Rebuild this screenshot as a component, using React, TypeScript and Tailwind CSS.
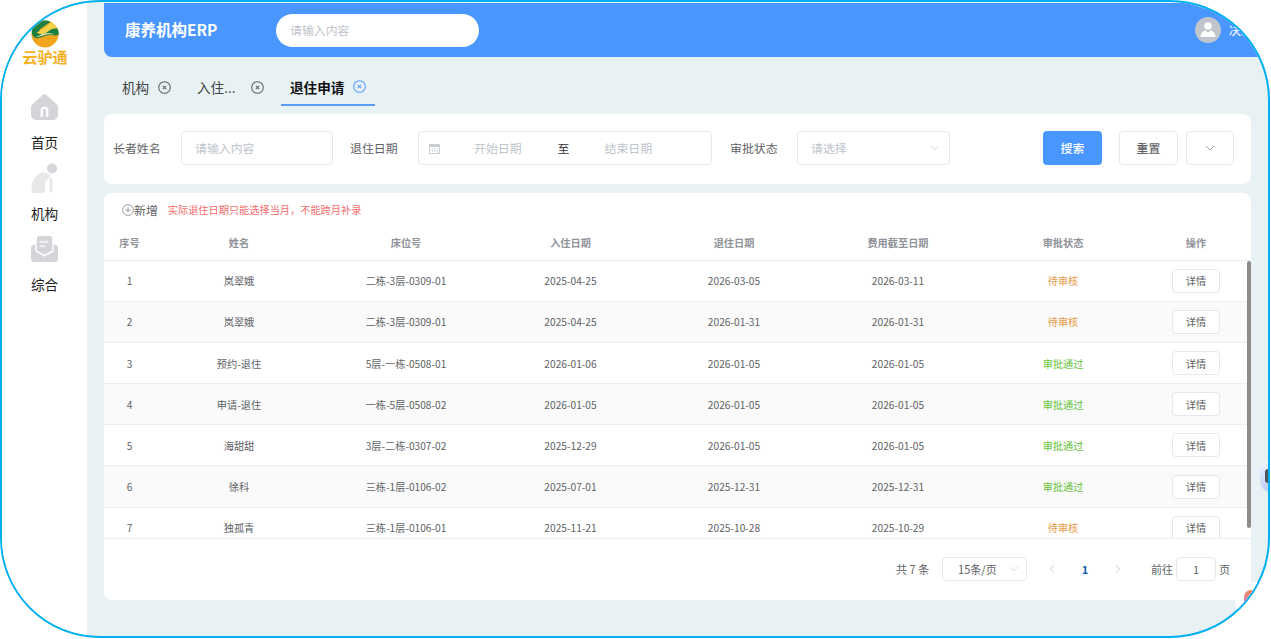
import { ChevronDown, ChevronLeft, ChevronRight } from "lucide-react";

const rows = [
  { id: 1, name: "岚翠娥", bed: "二栋-3层-0309-01", inDate: "2025-04-25", outDate: "2026-03-05", feeDate: "2026-03-11", status: "待审核" },
  { id: 2, name: "岚翠娥", bed: "二栋-3层-0309-01", inDate: "2025-04-25", outDate: "2026-01-31", feeDate: "2026-01-31", status: "待审核" },
  { id: 3, name: "预约-退住", bed: "5层-一栋-0508-01", inDate: "2026-01-06", outDate: "2026-01-05", feeDate: "2026-01-05", status: "审批通过" },
  { id: 4, name: "申请-退住", bed: "一栋-5层-0508-02", inDate: "2026-01-05", outDate: "2026-01-05", feeDate: "2026-01-05", status: "审批通过" },
  { id: 5, name: "海甜甜", bed: "3层-二栋-0307-02", inDate: "2025-12-29", outDate: "2026-01-05", feeDate: "2026-01-05", status: "审批通过" },
  { id: 6, name: "徐科", bed: "三栋-1层-0106-02", inDate: "2025-07-01", outDate: "2025-12-31", feeDate: "2025-12-31", status: "审批通过" },
  { id: 7, name: "独孤青", bed: "三栋-1层-0106-01", inDate: "2025-11-21", outDate: "2025-10-28", feeDate: "2025-10-29", status: "待审核" },
];

const columns = ["序号", "姓名", "床位号", "入住日期", "退住日期", "费用截至日期", "审批状态", "操作"];
const gridCols = "grid grid-cols-[51px_168px_166px_163px_164px_164px_166px_100px]";

function TabClose({ active, className }: { active?: boolean; className: string }) {
  const color = active ? "#5a9cff" : "#606266";
  return (
    <svg width="13" height="13" viewBox="0 0 13 13" fill="none" stroke={color} className={className}>
      <circle cx="6.500" cy="6.500" r="5.800" strokeWidth="1.100" />
      <path d="M4.800 4.800l3.400 3.400M8.200 4.800l-3.400 3.400" strokeWidth="1.100" />
    </svg>
  );
}

function Logo() {
  return (
    <svg width="28" height="28" viewBox="0 0 28 28">
      <circle cx="14" cy="14" r="13.500" fill="#f0a51c" />
      <path d="M1 10C3 4 8 .5 14 .5c2 0 4 .5 5.500 1.500C16 4 12 7 8 10c2 2 6 1 9-1 3-2 6-3 9-1.500 1.500 2.500 2 5 1.500 7.500-3 1-6 0-9 0-5 0-9 4-14 3C1 16 .5 13 1 10z" fill="#1e8040" />
      <path d="M6 13c4 2 8 1 11-1.500 3-2.500 6-3.500 9.500-2.500-1-2.500-3-5-6-6.500C17 4 13 8 9 10.500 7.500 11.500 6.500 12 6 13z" fill="#f6d24c" />
      <path d="M4 17c3 0 6-3 10-3.500 3-.5 7 .5 9 .5-3 1-5-.500-8 .5-4 1-7 3-11 2.500z" fill="#fdf3c4" />
    </svg>
  );
}

function HomeIcon() {
  return (
    <svg width="27" height="27" viewBox="0 0 28 28">
      <path d="M11.500 1.500a3.600 3.600 0 0 1 5 0L26.500 10.500a4 4 0 0 1 1.500 3.200V22a5 5 0 0 1-5 5H5a5 5 0 0 1-5-5V13.700a4 4 0 0 1 1.500-3.200z" fill="#d4d5d9" />
      <path d="M10 23.500V17a4 4 0 0 1 8 0v6.500h-2.300V17a1.700 1.700 0 0 0-3.400 0v6.500z" fill="#fff" />
    </svg>
  );
}

function ElderIcon() {
  return (
    <svg width="27" height="30" viewBox="0 0 27 30">
      <circle cx="21" cy="5.500" r="5" fill="#d6d7db" />
      <path d="M.5 27.500C-.5 19 5 9.500 13 9.500c3 0 5.500 1.500 7 3.500l-3.500 3c-1.500 1-2.500 3-2.500 5.500v6.500a2 2 0 0 1-2 2H3a2.500 2.500 0 0 1-2.500-2.500z" fill="#e8e8eb" />
      <path d="M18.500 15h3v13a1.500 1.500 0 0 1-3 0z" fill="#e8e8eb" />
    </svg>
  );
}

function MailIcon() {
  return (
    <svg width="27" height="26" viewBox="0 0 28 27">
      <path d="M6 2.500A2.500 2.500 0 0 1 8.500 0h11A2.500 2.500 0 0 1 22 2.500V15l-8 4.500L6 15z" fill="#d4d5d9" />
      <path d="M9 5h9v2H9zM9 9.500h5.500v2H9z" fill="#f3f3f5" />
      <path d="M0 11l4.500-3v8L14 21.500 23.500 16V8L28 11v13a3 3 0 0 1-3 3H3a3 3 0 0 1-3-3z" fill="#d4d5d9" />
    </svg>
  );
}

function NavItem({ icon, label }: { icon: React.ReactNode; label: string }) {
  return (
    <div className="flex h-[71px] flex-col items-center">
      <div className="flex h-[30px] items-center justify-center">{icon}</div>
      <div className="mt-[10px] text-[13.600px] leading-[20px] text-[#222]">{label}</div>
    </div>
  );
}

function Select({ className, placeholder }: { className: string; placeholder: string }) {
  return (
    <div className={`flex items-center justify-between rounded border border-[#e4e7ed] bg-white ${className}`}>
      <span className="text-[#c0c4cc]">{placeholder}</span>
      <ChevronDown size={14} strokeWidth={1} className="text-[#b4b8c0]" />
    </div>
  );
}

export default function App() {
  return (
    <div className="h-[639px] w-[1271px] overflow-hidden bg-white font-['Noto_Sans_CJK_SC','Noto_Sans',sans-serif]">
      <div className="relative flex h-[638px] w-[1270px] overflow-hidden rounded-[100px] border-2 border-[#00b0f0] bg-[#e8f1f4]">
        <aside className="w-[85px] shrink-0 bg-white">
          <div className="mt-[18px] flex flex-col items-center">
            <Logo />
            <div className="-mt-[1px] pl-[1px] text-[15px] leading-[20px] font-bold text-[#f5b01e]">云驴通</div>
          </div>
          <div className="mt-[25px]">
            <NavItem icon={<HomeIcon />} label="首页" />
            <NavItem icon={<ElderIcon />} label="机构" />
            <NavItem icon={<MailIcon />} label="综合" />
          </div>
        </aside>

        <main className="min-w-0 flex-1 pl-[17px]">
          <header className="mt-[1px] -mr-[4px] flex h-[54px] items-center rounded-bl-lg bg-[#4a96ff] pl-[21px]">
            <div className="w-[151px] text-[15.500px] font-bold text-white">康养机构ERP</div>
            <div className="flex h-[33px] w-[203px] items-center rounded-full bg-white pl-[14px] text-[11.900px] text-[#c0c4cc]">请输入内容</div>
            <div className="mr-[19px] ml-auto flex items-center">
              <svg width="26" height="26" viewBox="0 0 26 26">
                <circle cx="13" cy="13" r="13" fill="#c0c4cc" />
                <circle cx="13" cy="9" r="3.800" fill="#fff" />
                <path d="M5.500 20c0-4 3-6.500 4.500-6.500l3 2 3-2c1.500 0 4.500 2.500 4.500 6.500z" fill="#fff" />
              </svg>
              <span className="ml-[8px] w-[24px] text-[11.900px] whitespace-nowrap text-white">决策</span>
            </div>
          </header>

          <nav className="mt-[18px] flex h-[31px] items-start pl-[18px] text-[13.600px] leading-[24px] text-[#444]">
            <div className="flex w-[75px] items-center">机构<TabClose className="ml-[9px]" /></div>
            <div className="flex w-[84px] items-center">入住...<TabClose className="ml-[15px]" /></div>
            <div className="flex h-[31px] w-[94px] items-start border-b-2 border-[#5a9cff] pl-[9px] font-bold text-[#111]">
              <span>退住申请</span>
              <TabClose active className="mt-[5px] ml-[9px]" />
            </div>
          </nav>

          <section className="mt-[8px] flex h-[70px] w-[1147px] items-center rounded-lg bg-white pb-[2px] text-[11.900px] text-[#606266]">
            <label className="ml-[9px] w-[68px]">长者姓名</label>
            <div className="flex h-[34px] w-[152px] items-center rounded border border-[#e4e7ed] pl-[13px] text-[#c0c4cc]">请输入内容</div>
            <label className="ml-[17px] w-[68px]">退住日期</label>
            <div className="flex h-[34px] w-[294px] items-center rounded border border-[#e4e7ed] pl-[10px] text-[#c0c4cc]">
              <svg width="11" height="11" viewBox="0 0 11 11" className="text-[#c8ccd3]">
                <path d="M.5 1.500h10v9H.5z" fill="none" stroke="currentColor" />
                <path d="M1 1.500h9V4H1zM2.500 5.500h1.500v1H2.500zM5 5.500h1.500v1H5zM7.500 5.500H9v1H7.500zM2.500 7.500h1.500v1H2.500zM5 7.500h1.500v1H5zM7.500 7.500H9v1H7.500z" fill="currentColor" />
              </svg>
              <span className="ml-[34px]">开始日期</span>
              <span className="ml-[36px] text-[#333]">至</span>
              <span className="ml-[35px]">结束日期</span>
            </div>
            <label className="ml-[18px] w-[67px]">审批状态</label>
            <Select className="h-[34px] w-[153px] pr-[7px] pl-[13px]" placeholder="请选择" />
            <button className="ml-[93px] h-[34px] w-[59px] rounded bg-[#4a96ff] text-[11.900px] font-medium text-white">搜索</button>
            <button className="ml-[17px] h-[34px] w-[59px] rounded border border-[#e4e7ed] text-[11.900px] font-medium text-[#606266]">重置</button>
            <button className="ml-[8px] flex h-[34px] w-[48px] items-center justify-center rounded border border-[#e4e7ed] text-[#8a8e96]">
              <ChevronDown size={16} strokeWidth={1.200} />
            </button>
          </section>

          <section className="relative mt-[9px] h-[407px] w-[1147px] overflow-hidden rounded-lg bg-white">
            <div className="flex h-[33px] items-center pl-[18px]">
              <svg width="12" height="12" viewBox="0 0 12 12" fill="none" stroke="#909399" strokeWidth="0.900">
                <circle cx="6" cy="6" r="5.400" />
                <path d="M3.500 6h5M6 3.500v5" />
              </svg>
              <span className="text-[11.900px] text-[#606266]">新增</span>
              <span className="ml-[10px] text-[10.200px] text-[#f56c6c]">实际退住日期只能选择当月，不能跨月补录</span>
            </div>

            <div className={`${gridCols} h-[35px] items-center border-b border-[#ebeef5] text-center text-[10.200px] font-bold text-[#909399]`}>
              {columns.map((c) => <div key={c}>{c}</div>)}
            </div>

            <div className="relative h-[278px] overflow-hidden border-b border-[#ebeef5]">
              {rows.map((r) => (
                <div key={r.id} className={`${gridCols} h-[41.100px] items-center border-b border-[#ebeef5] text-center text-[10.200px] text-[#606266] ${r.id % 2 === 0 ? "bg-[#fafafa]" : "bg-white"}`}>
                  <div>{r.id}</div>
                  <div>{r.name}</div>
                  <div>{r.bed}</div>
                  <div>{r.inDate}</div>
                  <div>{r.outDate}</div>
                  <div>{r.feeDate}</div>
                  <div className={r.status === "待审核" ? "text-[#e99a45]" : "text-[#67c23a]"}>{r.status}</div>
                  <div className="flex justify-center">
                    <button className="h-[24px] w-[48px] rounded-sm border border-[#e4e7ed] bg-white text-[10.200px] text-[#606266]">详情</button>
                  </div>
                </div>
              ))}
              <div className="absolute top-0 right-0 h-[267px] w-[4px] rounded-sm bg-[#8b8b8b]" />
            </div>

            <div className="mt-[18px] flex h-[24px] items-center text-[11.050px] text-[#606266]">
              <span className="ml-[792px] w-[46px]">共 7 条</span>
              <Select className="h-[24px] w-[85px] pr-[5px] pl-[15px] [&>span]:text-[#606266]" placeholder="15条/页" />
              <ChevronLeft size={14} strokeWidth={1.200} className="ml-[18px] text-[#b4b8c0]" />
              <span className="w-[52px] text-center font-bold text-[#0f5fa8]">1</span>
              <ChevronRight size={14} strokeWidth={1.200} className="text-[#b4b8c0]" />
              <span className="ml-[26px]">前往</span>
              <div className="ml-[3px] flex h-[24px] w-[40px] items-center justify-center rounded border border-[#e4e7ed]">1</div>
              <span className="ml-[3px]">页</span>
            </div>
          </section>
        </main>

        <div className="absolute top-[458px] right-[-14px] flex h-[32px] w-[22px] items-center rounded-full bg-gradient-to-b from-[#f4f7ff] to-[#b9cdf5] pl-[5px]">
          <div className="h-[14px] w-[6px] rounded-full bg-[#55565c]" />
        </div>
        <div className="absolute right-[-7px] bottom-[14px] h-[40px] w-[40px] rounded-full bg-white">
          <div className="mt-[8px] ml-[9px] h-[18px] w-[14px] rounded-full bg-gradient-to-b from-[#f28a50] to-[#c468d8]" />
        </div>
      </div>
    </div>
  );
}
